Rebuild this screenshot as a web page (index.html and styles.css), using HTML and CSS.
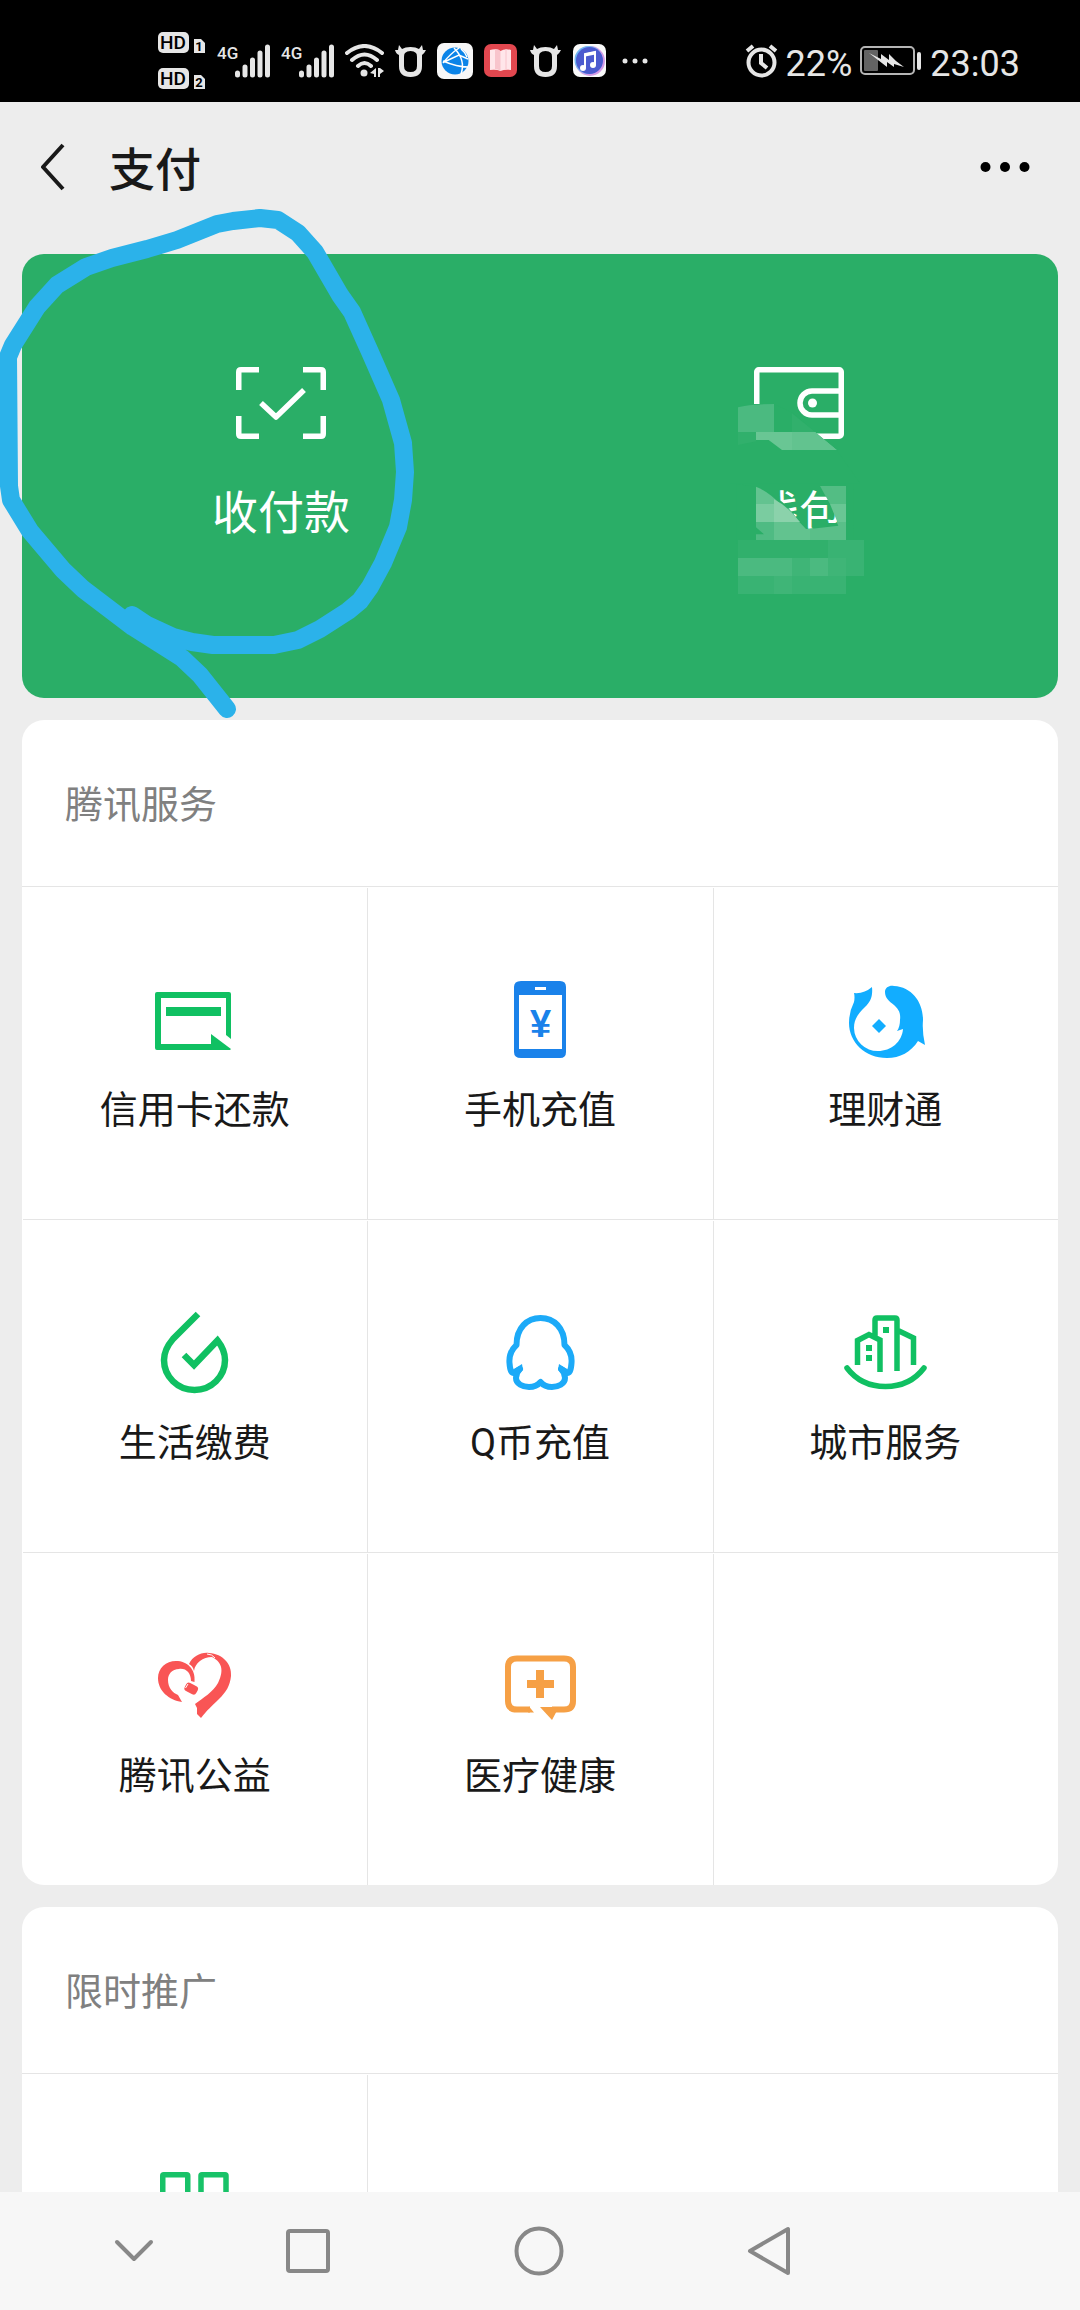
FILE: index.html
```html
<!DOCTYPE html>
<html lang="zh-CN">
<head>
<meta charset="utf-8">
<meta name="viewport" content="width=device-width, initial-scale=1">
<title>支付</title>
<link rel="stylesheet" href="styles.css">
</head>
<body>
<svg class="defs" aria-hidden="true">
  <symbol id="cow" viewBox="0 0 31 32">
    <path fill="#e6e6e6" fill-rule="evenodd" d="M4 0L7 4Q10 2 15.500 2T24 4L27 0L28 5L31 5Q29 9 27 10V21Q27 32 15.500 32T4 21V10Q1 9 0 5L3 5ZM10 8Q9 9 9 12V21Q9 27 15.500 27T22 21V12Q22 9 21 8Q19 6 15.500 6T10 8Z"/>
  </symbol>
</svg>
<div class="app">
  <div class="status">
    <div class="status-group">
      <svg width="48" height="58" viewBox="0 0 48 58">
        <rect width="31" height="21" rx="5" fill="#e6e6e6"/><rect y="36" width="31" height="21" rx="5" fill="#e6e6e6"/>
        <path d="M36 7h7l4 4v10H36zM36 43h7l4 4v10H36z" fill="#e6e6e6"/>
        <text class="hd" x="15" y="17">HD</text><text class="hd" x="15" y="53">HD</text>
        <text class="sim" x="41" y="19">1</text><text class="sim" x="41" y="55">2</text>
      </svg>
      <svg width="53" height="34" viewBox="0 0 53 34">
        <path d="M20.500 29v2M28 23v8M35.500 16v15M43 9v22M50.500 3v28" stroke="#e6e6e6" stroke-width="5" stroke-linecap="round"/>
        <text class="net" x="0" y="15">4G</text>
      </svg>
      <svg width="53" height="34" viewBox="0 0 53 34">
        <path d="M20.500 29v2M28 23v8M35.500 16v15M43 9v22M50.500 3v28" stroke="#e6e6e6" stroke-width="5" stroke-linecap="round"/>
        <text class="net" x="0" y="15">4G</text>
      </svg>
      <svg width="39" height="34" viewBox="0 0 39 34" fill="none" stroke="#e6e6e6" stroke-width="4" stroke-linecap="round">
        <path d="M2 9Q19.500-5 37 9M7 16Q19.500 5 32 16M13 22Q19.500 16 26 22"/>
        <circle cx="19" cy="29" r="3.500" fill="#e6e6e6" stroke="none"/>
        <path d="M31 24v9h-2v-3l-4-1zM33 24h2l4 3-4 3v3h-2z" fill="#e6e6e6" stroke="none"/>
      </svg>
      <svg width="31" height="32"><use href="#cow"/></svg>
      <svg width="36" height="36" viewBox="0 0 36 36">
        <rect width="36" height="36" rx="7" fill="#f7f7f7"/><circle cx="18" cy="18" r="13.500" fill="#0b84e8"/>
        <path d="M17 5Q29 17 24 31M6 20Q13 11 22 5M24 6Q28 9 30 14M6 18Q20 24 31 24M7 19L22 12L31 16" fill="none" stroke="#fff" stroke-width="1.500"/>
      </svg>
      <svg width="35" height="34" viewBox="0 0 35 34">
        <rect width="33" height="33" rx="7" fill="#e2474f"/>
        <path d="M6 6Q12 4 16.500 7Q21 4 27 6V26Q21 25 16.500 27Q12 25 6 26Z" fill="#ffe6ea"/><path d="M11 5Q15 5 16.500 7V27Q14 25 11 25Z" fill="#f8c4cc"/><path d="M22 5v20" stroke="#f8c4cc"/>
      </svg>
      <svg width="31" height="32"><use href="#cow"/></svg>
      <svg width="35" height="34" viewBox="0 0 35 34">
        <rect x="1" width="33" height="33" rx="7" fill="#fafafa"/><circle cx="18" cy="17" r="15" fill="#d59be8"/><circle cx="16.500" cy="16" r="14" fill="#72b8f2"/><circle cx="17.500" cy="16.500" r="13.500" fill="#4c5bcf"/>
        <path d="M13 24V10L23 8V21" fill="none" stroke="#fff" stroke-width="2"/><path d="M13 11L23 9" stroke="#fff" stroke-width="3"/><circle cx="11" cy="24" r="3" fill="#fff"/><circle cx="21" cy="21" r="3" fill="#fff"/>
      </svg>
      <svg width="36" height="8" viewBox="0 0 36 8" fill="#e6e6e6"><circle cx="7" cy="4" r="2.500"/><circle cx="17" cy="4" r="2.500"/><circle cx="27" cy="4" r="2.500"/></svg>
    </div>
    <div class="status-group status-right">
      <svg width="33" height="34" viewBox="0 0 33 34" fill="none" stroke="#e6e6e6" stroke-width="4">
        <circle cx="16.500" cy="18.500" r="13"/><path d="M2 7l6-5M31 7l-6-5"/><path d="M16 10v9l6 5"/>
      </svg>
      <span>22%</span>
      <svg width="62" height="30" viewBox="0 0 62 30">
        <rect x="1" y="1" width="53" height="27" rx="4" fill="none" stroke="#b5b5b5" stroke-width="2"/><rect x="4" y="4" width="14" height="21" rx="1" fill="#636363"/>
        <path d="M9 7L21 13V8L29 14V8L36 15L44 21L34 18V21L27 16V21Z" fill="#e6e6e6"/><rect x="57" y="6" width="4" height="18" rx="2" fill="#e6e6e6"/>
      </svg>
      <span>23:03</span>
    </div>
  </div>

  <header class="topbar">
    <button class="icon-btn" type="button" aria-label="返回"><svg width="24" height="48" viewBox="0 0 24 48" fill="none" stroke="#191919" stroke-width="4"><path d="M22 2L2 24L22 46" stroke-linejoin="round"/></svg></button>
    <h1>支付</h1>
    <button class="icon-btn" type="button" aria-label="更多"><svg width="50" height="12" viewBox="0 0 50 12"><circle cx="5.500" cy="6" r="5"/><circle cx="25" cy="6" r="5"/><circle cx="44.500" cy="6" r="5"/></svg></button>
  </header>

  <main class="content">
    <section class="pay">
      <a class="pay-item" href="#pay">
        <svg width="90" height="72" viewBox="0 0 90 72" fill="none" stroke="#fff" stroke-width="5.500">
          <path d="M23 2.750H5Q2.750 2.750 2.750 5V23M67 2.750H85Q87.250 2.750 87.250 5V23M2.750 49V67Q2.750 69.250 5 69.250H23M87.250 49V67Q87.250 69.250 85 69.250H67"/><path d="M25 36L40 50L68 23" stroke-linejoin="round"/>
        </svg>
        <span>收付款</span>
      </a>
      <a class="pay-item" href="#wallet">
        <svg width="90" height="72" viewBox="0 0 90 72" fill="none" stroke="#fff" stroke-width="5.500">
          <rect x="2.750" y="2.750" width="84.500" height="66.500" rx="2"/><path d="M87 24H58A11.500 11.500 0 0 0 58 48H87"/><circle cx="58.500" cy="36" r="4.500" fill="#fff" stroke="none"/>
        </svg>
        <span>钱包</span>
        <svg class="mosaic" width="220" height="290" viewBox="0 0 660 870" aria-hidden="true">
          <path fill="#2aae67" d="M90 222H222L277 248L352 312L410 360L480 460H90ZM110 462L168 470Q240 500 270 540L318 597L415 587L405 540L360 462H460V640H110Z"/>
          <path fill="#4bba80" d="M114 232Q150 222 222 222V306H114Z"/><path fill="#31b06c" d="M114 306H168V334L114 345ZM276 250L345 306H276Z"/>
          <path fill="#69c694" d="M168 306H345L410 360H246L206 330H168Z"/><path fill="#62c38f" d="M276 306H345L410 360H276Z"/>
          <path fill="#63c390" d="M168 470Q205 485 240 522H168Z"/><path fill="#7acca0" d="M168 522H222V576H168Z"/><path fill="#8bd2ab" d="M222 508Q250 522 276 548L300 576H222Z"/>
          <path fill="#4fbb83" d="M168 576H222V630H168V613H192L168 592Z"/><path fill="#62c38f" d="M222 576H298L318 597L330 597V630H222Z"/>
          <path fill="#5abf89" d="M330 597L415 587L410 576H438V630H330Z"/><path fill="#53bd84" d="M360 468H438V522H390Z"/><path fill="#69c694" d="M390 522H438V576H412Z"/>
          <path fill="#31b06c" d="M114 630H384V684H114Z"/><path fill="#39b373" d="M384 630H492V738H438V684H384Z"/>
          <path fill="#4bba80" d="M114 684H276V738H114ZM330 684H384V738H330Z"/><path fill="#3fb577" d="M276 684H330V738H276ZM384 684H438V738H384ZM222 738H276V792H222Z"/><path fill="#39b373" d="M114 738H222V792H114ZM276 738H438V792H276Z"/>
        </svg>
      </a>
    </section>

    <section class="card">
      <h2>腾讯服务</h2>
      <div class="grid">
        <a class="cell" href="#card"><svg class="ico" viewBox="0 0 96 96" fill="#10c062"><path d="M10 20H82Q84 20 84 22V67L79 63V26H14V72H64V62L84 77L83 78H10Q8 78 8 76V22Q8 20 10 20Z"/><path d="M19 35H74V44H19Z"/></svg><span>信用卡还款</span></a>
        <a class="cell" href="#phone"><svg class="ico" viewBox="0 0 96 96" fill="#1a82ea"><path fill-rule="evenodd" d="M29 9H68Q74 9 74 15V80Q74 86 68 86H29Q22 86 22 80V15Q22 9 29 9ZM27 23V77H70V23ZM43 15V18H54V15Z"/><text class="yen" x="48.500" y="65">¥</text></svg><span>手机充值</span></a>
        <a class="cell" href="#licai"><svg class="ico" viewBox="0 0 96 96" fill="#12adff"><path d="M17 21Q27 22 35 15C36 25 33 30 28 35C21 42 17 47 17 56A23.500 23.500 0 0 0 41 79C54 79 65 70 66 57L60 59Q63 55 63 48C64 40 61 37 57 33C52 29 48 26 48 20C48 15 53 13 57 14C75 15 86 30 86 48Q85 60 88 73L81 69C74 80 63 86 50 86C28 86 12 70 12 51Q12 40 17 30Q18 25 17 21Z"/><path d="M42 47L49 54L42 61L35 54Z"/></svg><span>理财通</span></a>
        <a class="cell" href="#life"><svg class="ico" viewBox="0 0 96 96" fill="none" stroke="#10c062" stroke-width="6.500"><path d="M51 9L26 34C20 41 17 47 17 55A30.500 30 0 0 0 78 55Q78 45 70.500 35.500L47 60L37 50"/></svg><span>生活缴费</span></a>
        <a class="cell" href="#qcoin"><svg class="ico" viewBox="0 0 96 96" fill="none" stroke="#1caaf8" stroke-width="6" stroke-linejoin="round"><path d="M48.500 13C62 13 72.500 23 72.500 40C78 45 80 52 79.500 58C79 66 77 69 75 67.500L69 64Q73 68 73 73C73 79 66 82 60 82C54 82 51 80 48.500 77C46 80 43 82 37 82C31 82 24 79 24 73Q24 68 28 64L22 67.500C20 69 18 66 17.500 58C17 52 19 45 24.500 40C24.500 23 35 13 48.500 13Z"/><path fill="#1caaf8" stroke="none" d="M67 59L66 65L71 70L75 64ZM30 59L31 65L26 70L22 64Z"/></svg><span>Q币充值</span></a>
        <a class="cell" href="#city"><svg class="ico" viewBox="0 0 96 96" fill="none" stroke="#10c062" stroke-width="5.500"><path d="M10 63Q24 81.500 48.500 81.500T87 63" stroke-linecap="round"/><path d="M20.500 60V35.500L32 29.500L43 35V67M38 31V15Q38 13 40 13H58Q60 13 60 15V66M60 25L76.500 33V60"/><path fill="#10c062" stroke="none" d="M46 22h6v6h-6zM29 40h6v6h-6zM29 50h6v6h-6z"/></svg><span>城市服务</span></a>
        <a class="cell" href="#charity"><svg class="ico" viewBox="0 0 96 96" fill="#f95555"><path d="M35 64C22 62 11 53 11 40C11 30 19 23 29 23C40 23 49 31 47.500 44L44 43C44 35 39 30 32 31C25 31 21 36 21 42C21 50 26 55 31 57Z"/><path d="M42 26C46 18 54 14 62 15C76 16 85 26 84 38C83 48 79 54 72 61C65 68 60 72 54 80L50 76L50 70L48 66C56 60 66 54 71 45C76 35 77 25 65 19C56 19 48 25 47 33Q46 28 42 26Z"/><path d="M60 16Q65 16 68 20" fill="none" stroke="#fff"/><rect x="38" y="46" width="13" height="9" rx="3" transform="rotate(28 44 50)"/><path d="M38.500 50L41 46" stroke="#fff"/></svg><span>腾讯公益</span></a>
        <a class="cell" href="#health"><svg class="ico" viewBox="0 0 96 96" fill="#f6a045"><path fill="none" stroke="#f6a045" stroke-width="6" d="M38 71.500H25Q16 71.500 16 63V29Q16 20.500 25 20.500H72Q81 20.500 81 29V63Q81 71.500 72 71.500H60"/><path d="M37 68.500L42 74.500H36ZM48 69H66L64 74.500L60 82ZM44 32H52V42H62V50H52V60H44V50H35V42H44Z"/></svg><span>医疗健康</span></a>
        <div class="cell"></div>
      </div>
    </section>

    <section class="card">
      <h2>限时推广</h2>
      <div class="grid">
        <a class="cell" href="#promo"><svg class="ico" viewBox="0 0 96 96" fill="none" stroke="#18c268" stroke-width="5.500"><rect x="15.750" y="15.750" width="25" height="25" rx="1"/><rect x="54" y="15.750" width="25" height="25" rx="1"/><rect x="15.750" y="54" width="25" height="25" rx="1"/><path d="M54 54h12v12M79 66v13H66"/></svg></a>
      </div>
    </section>
  </main>

  <nav class="sysnav">
    <button class="icon-btn" type="button" aria-label="收起"><svg width="40" height="24" viewBox="0 0 40 24"><path d="M3 3L20 20L37 3"/></svg></button>
    <button class="icon-btn" type="button" aria-label="最近任务"><svg width="46" height="46" viewBox="0 0 46 46"><rect x="3" y="3" width="40" height="40" rx="2"/></svg></button>
    <button class="icon-btn" type="button" aria-label="主屏幕"><svg width="50" height="50" viewBox="0 0 50 50"><circle cx="25" cy="25" r="22.500"/></svg></button>
    <button class="icon-btn" type="button" aria-label="后退"><svg width="46" height="50" viewBox="0 0 46 50"><path d="M41 3V47L3 25Z"/></svg></button>
  </nav>

  <svg class="marker" width="420" height="530" viewBox="0 200 420 530" aria-hidden="true">
    <path d="M132 615L147 625L173 637L192 642L213 645H274L298 640L320 629L348 611L360 601L370 587L383 563L398 527L403 500L405 472L403 443L391 400L370 352L352 312L340 295L315 252L298 233L278 220L260 218L233 221L217 224L177 240L147 249L112 258L86 267L57 285L37 307L25 326L13 345L8 357L9 486L11 500L30 531L63 570L83 589L133 627L182 658L200 675L227 709"/>
  </svg>
</div>
</body>
</html>
```
FILE: styles.css
```css
* { box-sizing: border-box; }

body {
  margin: 0;
  background: #ededed;
  color: #191919;
  font-family: Roboto, "Noto Sans CJK SC", sans-serif;
}

a { color: inherit; text-decoration: none; }
svg { display: block; flex: none; }
.defs { position: absolute; width: 0; height: 0; }

.app {
  position: relative;
  display: flex;
  flex-direction: column;
  height: 100vh;
  overflow: hidden;
}

.icon-btn {
  display: flex;
  align-items: center;
  justify-content: center;
  padding: 0;
  border: 0;
  background: none;
}

/* Status bar */
.status {
  display: flex;
  justify-content: space-between;
  flex: none;
  height: 102px;
  padding: 20px 60px 0 158px;
  background: #000;
  color: #e6e6e6;
  font-size: 36px;
}
.status-group { display: flex; align-items: center; gap: 11px; }
.status-right { gap: 8px; }
.status-right span { padding-top: 5px; }
.net { fill: #e6e6e6; font: 500 17px Roboto, sans-serif; }
.hd { font: 500 19px Roboto, sans-serif; text-anchor: middle; }
.sim { font: 700 13px Roboto, sans-serif; text-anchor: middle; }

/* Title bar */
.topbar {
  display: flex;
  align-items: center;
  flex: none;
  height: 130px;
  padding: 0 50px 0 41px;
}
.topbar h1 {
  flex: 1;
  margin: 0 0 0 44px;
  padding-top: 5px;
  font-size: 46px;
  font-weight: 500;
  line-height: 60px;
}

.content {
  display: flex;
  flex-direction: column;
  gap: 22px;
  flex: 1;
  min-height: 0;
  padding: 22px 22px 0;
  overflow: hidden;
}
.content > * { flex: none; }

.pay {
  display: grid;
  grid-template-columns: 1fr 1fr;
  border-radius: 22px;
  background: #2aae67;
  color: #fff;
}
.pay-item {
  position: relative;
  display: flex;
  flex-direction: column;
  align-items: center;
  gap: 44px;
  padding: 113px 0 155px;
  font-size: 46px;
  line-height: 60px;
}
.mosaic {
  position: absolute;
  top: 76px;
  left: calc(50% - 99px);
}

.card {
  overflow: hidden;
  border-radius: 22px;
  background: #fff;
}
.card h2 {
  margin: 0;
  padding: 57px 43px 53px;
  color: #808080;
  font-size: 38px;
  font-weight: 400;
  line-height: 56px;
}
.grid {
  display: grid;
  grid-template-columns: repeat(3, 1fr);
  row-gap: 1px;
  border-top: 1px solid #e5e5e5;
}
.cell {
  display: flex;
  flex-direction: column;
  align-items: center;
  gap: 14px;
  min-height: 332px;
  padding-top: 85px;
  box-shadow: 1px 1px #e5e5e5;
  font-size: 38px;
  line-height: 56px;
}
.ico { width: 96px; height: 96px; }
.yen { font: 700 38px "Liberation Sans", sans-serif; text-anchor: middle; }

/* System navigation */
.sysnav {
  display: grid;
  grid-template-columns: 117fr 231fr 231fr 231fr;
  flex: none;
  height: 118px;
  padding: 0 18% 0 7%;
  background: #f7f7f7;
}
.sysnav svg {
  fill: none;
  stroke: #888;
  stroke-width: 4;
  stroke-linecap: round;
  stroke-linejoin: round;
}

/* Hand-drawn highlight over the payment entry */
.marker {
  position: absolute;
  top: 200px;
  left: 0;
  fill: none;
  stroke: #2bb2ea;
  stroke-width: 18;
  stroke-linecap: round;
  stroke-linejoin: round;
  pointer-events: none;
}
```
